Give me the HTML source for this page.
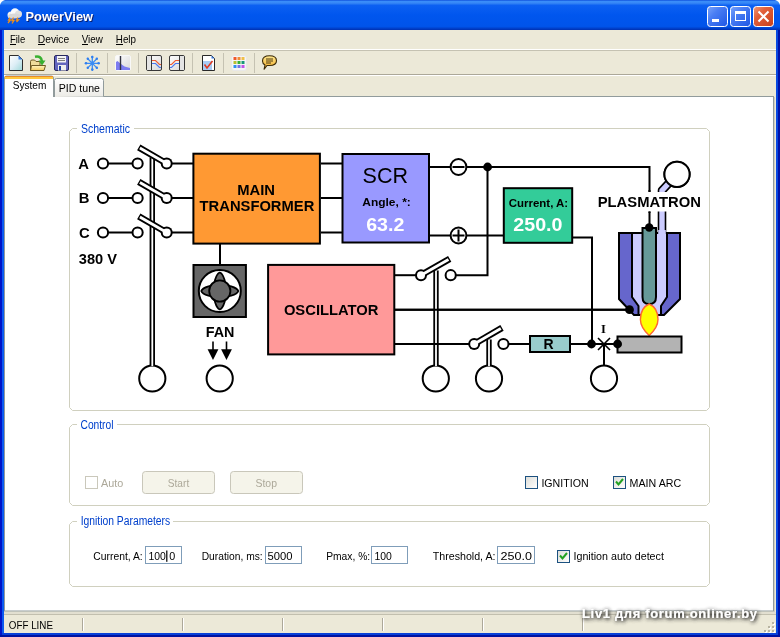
<!DOCTYPE html>
<html><head><meta charset="utf-8">
<style>
html,body{margin:0;padding:0;width:780px;height:637px;overflow:hidden;background:#fff}
svg{display:block;font-family:"Liberation Sans",sans-serif;will-change:transform}
</style></head><body>
<svg width="780" height="637" viewBox="0 0 780 637">
<defs>
 <linearGradient id="tb" x1="0" y1="0" x2="0" y2="1">
  <stop offset="0" stop-color="#0A48D8"/>
  <stop offset="0.04" stop-color="#3A8EFA"/>
  <stop offset="0.1" stop-color="#3888F6"/>
  <stop offset="0.18" stop-color="#0C60F2"/>
  <stop offset="0.5" stop-color="#0056EE"/>
  <stop offset="0.88" stop-color="#0054EA"/>
  <stop offset="0.93" stop-color="#0046D4"/>
  <stop offset="1" stop-color="#0030B0"/>
 </linearGradient>
 <linearGradient id="tabg" x1="0" y1="0" x2="0" y2="1">
  <stop offset="0" stop-color="#FFFFFF"/>
  <stop offset="1" stop-color="#ECEBE6"/>
 </linearGradient>
 <linearGradient id="cbg" x1="0" y1="0" x2="1" y2="1">
  <stop offset="0" stop-color="#DCDCD7"/>
  <stop offset="1" stop-color="#FFFFFF"/>
 </linearGradient>
 <linearGradient id="minb" x1="0" y1="0" x2="1" y2="1">
  <stop offset="0" stop-color="#7AA4FA"/>
  <stop offset="0.35" stop-color="#4A7EF4"/>
  <stop offset="1" stop-color="#1E56E4"/>
 </linearGradient>
 <linearGradient id="clsb" x1="0" y1="0" x2="1" y2="1">
  <stop offset="0" stop-color="#F09A78"/>
  <stop offset="0.35" stop-color="#E2603A"/>
  <stop offset="1" stop-color="#C8401A"/>
 </linearGradient>
</defs>

<!-- window frame -->
<rect x="0" y="0" width="780" height="637" fill="#0842D6"/>
<rect x="0" y="28" width="2" height="609" fill="#0014C8"/>
<rect x="2" y="28" width="2" height="609" fill="#0C5AF0"/>
<rect x="776" y="28" width="2" height="609" fill="#0848E0"/>
<rect x="778" y="28" width="2" height="609" fill="#0012A8"/>
<rect x="2" y="633" width="776" height="2" fill="#0840D8"/>
<rect x="0" y="635" width="780" height="2" fill="#0012A0"/>
<rect x="0" y="0" width="780" height="30" fill="url(#tb)"/>
<path d="M0 0 H5 Q1 1 0 5 Z" fill="#fff"/>
<path d="M780 0 H775 Q779 1 780 5 Z" fill="#fff"/>
<rect x="4" y="30" width="772" height="603" fill="#ECE9D8"/>

<!-- title -->
<g>
 <circle cx="11" cy="15" r="3.5" fill="#F0F0F0"/>
 <circle cx="15" cy="12.5" r="4.2" fill="#FAFAFA"/>
 <circle cx="18.5" cy="14" r="3.5" fill="#E0E0E0"/>
 <ellipse cx="14.5" cy="16" rx="6.5" ry="2.5" fill="#D8D8D8"/>
 <path d="M10 17.5 L8.5 20 H10.5 L8 23 M13.5 17.5 L12 20.5 H14 L12 23.5 M18 17.5 L16.5 20 H18.5 L16.5 22" stroke="#F29018" stroke-width="1.3" fill="none"/>
</g>
<text x="26.5" y="22" font-size="13" font-weight="bold" fill="#0A1E6E" textLength="67.5" lengthAdjust="spacingAndGlyphs">PowerView</text>
<text x="25.5" y="21" font-size="13" font-weight="bold" fill="#FFFFFF" textLength="67.5" lengthAdjust="spacingAndGlyphs">PowerView</text>

<!-- title buttons -->
<rect x="707.5" y="6.5" width="20" height="20" rx="3" fill="url(#minb)" stroke="#FFFFFF" stroke-width="1"/>
<rect x="712" y="19" width="7" height="3" fill="#fff"/>
<rect x="730.5" y="6.5" width="20" height="20" rx="3" fill="url(#minb)" stroke="#FFFFFF" stroke-width="1"/>
<rect x="735.5" y="11.5" width="10" height="9" fill="none" stroke="#fff" stroke-width="1"/>
<rect x="735" y="11" width="11" height="3" fill="#fff"/>
<rect x="753.5" y="6.5" width="20" height="20" rx="3" fill="url(#clsb)" stroke="#FFFFFF" stroke-width="1"/>
<path d="M758.5 11.5 L768.5 21.5 M768.5 11.5 L758.5 21.5" stroke="#fff" stroke-width="2"/>

<!-- menu -->
<g font-size="11.6" fill="#000">
 <text x="9.9" y="42.7" textLength="15.3" lengthAdjust="spacingAndGlyphs">File</text>
 <text x="37.8" y="42.7" textLength="31.4" lengthAdjust="spacingAndGlyphs">Device</text>
 <text x="81.7" y="42.7" textLength="21.1" lengthAdjust="spacingAndGlyphs">View</text>
 <text x="115.8" y="42.7" textLength="20.2" lengthAdjust="spacingAndGlyphs">Help</text>
</g>
<g fill="#000">
 <rect x="10" y="44" width="6" height="1"/><rect x="38" y="44" width="7" height="1"/><rect x="82" y="44" width="6" height="1"/><rect x="116" y="44" width="7" height="1"/>
</g>
<!-- toolbar lines -->
<rect x="4" y="49" width="772" height="1" fill="#FFFFFF"/>
<rect x="4" y="50" width="772" height="1" fill="#C5C2B2"/>
<rect x="4" y="74" width="772" height="1" fill="#ACA899"/>
<rect x="4" y="75" width="772" height="1" fill="#FFFFFF"/>

<!-- toolbar icons -->
<g id="tools">
 <defs>
  <linearGradient id="docg" x1="0" y1="0" x2="1" y2="1"><stop offset="0" stop-color="#FFFFFF"/><stop offset="0.5" stop-color="#DDEEF6"/><stop offset="1" stop-color="#9ED8D8"/></linearGradient>
  <linearGradient id="fldg" x1="0" y1="0" x2="0" y2="1"><stop offset="0" stop-color="#FFF4C0"/><stop offset="1" stop-color="#F2CC60"/></linearGradient>
  <linearGradient id="chg" x1="0" y1="0" x2="1" y2="1"><stop offset="0" stop-color="#FFFFFF"/><stop offset="1" stop-color="#D8D8D8"/></linearGradient>
  <linearGradient id="spg" x1="0" y1="0" x2="0" y2="1"><stop offset="0" stop-color="#FFE890"/><stop offset="1" stop-color="#F0A820"/></linearGradient>
 </defs>
 <!-- new -->
 <path d="M9.5 55.5 H18.5 L22.5 59.5 V70.5 H9.5 Z" fill="url(#docg)" stroke="#2E2E2E"/>
 <path d="M18.5 55.5 L22.5 59.5 H18.5 Z" fill="#3C7CE0"/>
 <!-- open -->
 <path d="M30.5 70.5 V61.5 Q30.5 60 32 60 H34.5 L36 61.5 H40 V70.5 Z" fill="#EEDC9A" stroke="#6E5A22"/>
 <path d="M30.5 70.5 L31.5 65.5 H45.5 L44 70.5 Z" fill="url(#fldg)" stroke="#6E5A22"/>
 <path d="M35 56.8 Q41.5 55.5 42 61.5" stroke="#38B030" stroke-width="2.6" fill="none"/>
 <path d="M38.5 60.5 H45.5 L42 65.5 Z" fill="#38B030"/>
 <!-- save -->
 <rect x="54.5" y="55.5" width="14" height="15" rx="1.5" fill="#6366BE" stroke="#28285E"/>
 <rect x="57" y="56" width="9" height="6.5" fill="#F4F4F4"/>
 <path d="M58 58.5 H65 M58 60.5 H65" stroke="#707070" stroke-width="0.9"/>
 <rect x="58" y="65" width="8" height="5.5" fill="#EEEEEE"/>
 <rect x="59" y="66" width="2" height="4.5" fill="#2040A0"/>
 <!-- sep -->
 <rect x="76" y="53" width="1" height="20" fill="#C5C2B2"/>
 <!-- snowflake -->
 <g stroke="#3A8CF4" stroke-width="1.3" stroke-linecap="round">
  <path d="M92.3 56.5 V70 M85.5 63.3 H99 M87.5 58.5 L97.1 68.1 M87.5 68.1 L97.1 58.5"/>
 </g>
 <g fill="#2F7FF0">
  <circle cx="92.3" cy="57" r="1.3"/><circle cx="92.3" cy="69.6" r="1.3"/><circle cx="86" cy="63.3" r="1.3"/><circle cx="98.6" cy="63.3" r="1.3"/>
  <circle cx="87.8" cy="58.8" r="1.2"/><circle cx="96.8" cy="67.8" r="1.2"/><circle cx="87.8" cy="67.8" r="1.2"/><circle cx="96.8" cy="58.8" r="1.2"/>
 </g>
 <rect x="107" y="53" width="1" height="20" fill="#C5C2B2"/>
 <!-- chart1 -->
 <rect x="115.5" y="55.5" width="15" height="15" rx="1.5" fill="url(#chg)" stroke="#F8F8F8"/>
 <path d="M116 70 V62 L117.5 61 L120.5 63.5 Q124 67 130 68 V70 Z" fill="#7C7CF0"/>
 <rect x="119.8" y="56" width="1.4" height="14" fill="#303040"/>
 <rect x="138" y="53" width="1" height="20" fill="#C5C2B2"/>
 <!-- chart2 -->
 <rect x="146.5" y="55.5" width="15" height="15" rx="1.5" fill="url(#chg)" stroke="#383838"/>
 <rect x="147" y="56" width="4.5" height="14" fill="#E4E4E4"/>
 <rect x="151" y="56" width="1" height="14" fill="#383838"/>
 <path d="M152 60.5 H155.5 L159.5 64.5 H161" stroke="#F05A30" fill="none" stroke-width="1.1"/>
 <path d="M152 63.5 H155.5 L159.5 67.5 H161" stroke="#4A78F0" fill="none" stroke-width="1.1"/>
 <!-- chart3 -->
 <rect x="169.5" y="55.5" width="15" height="15" rx="1.5" fill="url(#chg)" stroke="#383838"/>
 <rect x="180" y="56" width="4" height="14" fill="#E4E4E4"/>
 <rect x="179" y="56" width="1" height="14" fill="#383838"/>
 <path d="M170 64.5 H171.5 L175.5 60.5 H179" stroke="#F05A30" fill="none" stroke-width="1.1"/>
 <path d="M170 67.5 H171.5 L175.5 63.5 H179" stroke="#4A78F0" fill="none" stroke-width="1.1"/>
 <rect x="192" y="53" width="1" height="20" fill="#C5C2B2"/>
 <!-- check doc -->
 <path d="M202.5 55.5 H211.5 L214.5 58.5 V70.5 H202.5 Z" fill="#FFFFFF" stroke="#282828"/>
 <path d="M211.5 55.5 L214.5 58.5 H211.5 Z" fill="#3C7CE0"/>
 <rect x="203" y="61" width="9" height="9" fill="#A8CCF4"/>
 <path d="M204.5 64.5 L207 68 L212.5 61" stroke="#E03A20" stroke-width="1.6" fill="none"/>
 <rect x="223" y="53" width="1" height="20" fill="#C5C2B2"/>
 <!-- grid -->
 <rect x="231.5" y="55.5" width="15" height="15" rx="2.5" fill="#F6F6F6" stroke="#E8E8E8"/>
 <rect x="233.5" y="57" width="3" height="3" fill="#F0582A"/><rect x="237.5" y="57" width="3" height="3" fill="#F08A38"/><rect x="241.5" y="57" width="3" height="3" fill="#F0C048"/>
 <rect x="233.5" y="61" width="3" height="3" fill="#B8C030"/><rect x="237.5" y="61" width="3" height="3" fill="#38B038"/><rect x="241.5" y="61" width="3" height="3" fill="#189878"/>
 <rect x="233.5" y="65" width="3" height="3" fill="#3090F0"/><rect x="237.5" y="65" width="3" height="3" fill="#7474E8"/><rect x="241.5" y="65" width="3" height="3" fill="#C054E8"/>
 <rect x="254" y="53" width="1" height="20" fill="#C5C2B2"/>
 <!-- speech -->
 <path d="M262.5 61 Q262.5 55.8 269.5 55.8 Q276.5 55.8 276.5 60.8 Q276.5 65.5 269.5 65.5 L267 65.5 L264 69.5 L265 65 Q262.5 63.8 262.5 61 Z" fill="url(#spg)" stroke="#3A2A08" stroke-width="1.1"/>
 <path d="M266 59 H273 M266 61 H273 M266 63 H271" stroke="#3A2A08" stroke-width="0.9"/>
</g>

<!-- tab panel -->
<rect x="4.5" y="96.5" width="769" height="514.5" fill="#FFFFFF" stroke="#919B9C"/>
<rect x="774" y="97" width="1" height="515" fill="#D0CEC0"/>
<rect x="4" y="612" width="772" height="2" fill="#E2DFD0"/>
<!-- tabs -->
<path d="M54.5 97 V80.5 Q54.5 78.5 56.5 78.5 H101.5 Q103.5 78.5 103.5 80.5 V96.5" fill="url(#tabg)" stroke="#919B9C"/>
<path d="M4.5 97 V78 Q4.5 76 6.5 76 H51.5 Q53.5 76 53.5 78 V97" fill="#FFFFFF" stroke="#919B9C"/>
<path d="M5 79 V77.5 Q5 76 7 76 H51 Q53 76 53 77.5 V79 Z" fill="#FFC83C"/>
<rect x="5" y="76" width="48" height="1" fill="#E68B2C"/>
<rect x="5" y="96" width="48" height="2" fill="#FFFFFF"/>
<text x="12.7" y="89.4" font-size="11.8" textLength="33.6" lengthAdjust="spacingAndGlyphs">System</text>
<text x="58.8" y="91.5" font-size="11.8" textLength="41.1" lengthAdjust="spacingAndGlyphs">PID tune</text>

<!-- group boxes -->
<g fill="none" stroke="#D0D0BF">
 <path d="M72.5 128.5 H706.5 L709.5 131.5 V407.5 L706.5 410.5 H72.5 L69.5 407.5 V131.5 Z M72.5 424.5 H706.5 L709.5 427.5 V502.5 L706.5 505.5 H72.5 L69.5 502.5 V427.5 Z M72.5 521.5 H706.5 L709.5 524.5 V583.5 L706.5 586.5 H72.5 L69.5 583.5 V524.5 Z"/>
</g>
<g fill="#FFFFFF">
 <rect x="77" y="123" width="57" height="10"/>
 <rect x="77" y="419" width="40" height="10"/>
 <rect x="77" y="515" width="96" height="10"/>
</g>
<g font-size="12" fill="#0040CC">
 <text x="81" y="132.5" textLength="49" lengthAdjust="spacingAndGlyphs">Schematic</text>
 <text x="80.5" y="429" textLength="33" lengthAdjust="spacingAndGlyphs">Control</text>
 <text x="80.7" y="525" textLength="89.5" lengthAdjust="spacingAndGlyphs">Ignition Parameters</text>
</g>

<!-- SCHEMATIC -->
<g id="sch" stroke="#000" stroke-width="2" fill="none">
 <!-- input lines -->
 <path d="M107.5 163.5 H133 M107.5 198 H133 M107.5 232.5 H133"/>
 <path d="M172 163.5 H193 M172 198 H193 M172 232.5 H193"/>
 <path d="M321 163.5 H342 M321 198 H342 M321 232.5 H342"/>
 <!-- scr outputs -->
 <path d="M430 167 H450.5 M466.5 167 H649.5 V227"/>
 <path d="M430 235.5 H450.5 M466.5 235.5 H503"/>
 <path d="M487.5 167 V275.2 H456"/>
 <path d="M573 237.5 H592 V344"/>
 <!-- fan connector -->
 <path d="M220 244 V264"/>
 <!-- osc lines -->
 <path d="M395 275.2 H416"/>
 <path d="M395 309.7 H629.5"/>
 <path d="M395 344 H469"/>
 <path d="M508.5 344 H530 M570 344 H617"/>
 <path d="M604 344 V365"/>
</g>

<!-- boxes -->
<rect x="193.4" y="153.7" width="126.5" height="89.9" fill="#FF9933" stroke="#000" stroke-width="2"/>
<rect x="342.5" y="154" width="86.5" height="88.5" fill="#9999FF" stroke="#000" stroke-width="2"/>
<rect x="503.8" y="188.2" width="68.4" height="54.6" fill="#33CC99" stroke="#000" stroke-width="2"/>
<rect x="268.1" y="264.9" width="126.2" height="89.5" fill="#FF9999" stroke="#000" stroke-width="2"/>
<rect x="193.5" y="265" width="52.4" height="52" fill="#666666" stroke="#000" stroke-width="2"/>
<rect x="530" y="336" width="40" height="16" fill="#99CCCC" stroke="#000" stroke-width="2"/>

<!-- fan -->
<circle cx="219.8" cy="291" r="21" fill="#fff" stroke="#000" stroke-width="2"/>
<path d="M201.3 291 C202.5 287 213 284.6 219.8 284.6 C226.6 284.6 237.1 287 238.3 291 C237.1 295 226.6 297.4 219.8 297.4 C213 297.4 202.5 295 201.3 291 Z" fill="#666" stroke="#000" stroke-width="1.8"/>
<path d="M219.8 272.5 C223.8 273.7 226.2 284.2 226.2 291 C226.2 297.8 223.8 308.3 219.8 309.5 C215.8 308.3 213.4 297.8 213.4 291 C213.4 284.2 215.8 273.7 219.8 272.5 Z" fill="#666" stroke="#000" stroke-width="1.8"/>
<circle cx="219.8" cy="291" r="10.6" fill="#666" stroke="#000" stroke-width="1.8"/>

<!-- circles -->
<g fill="#fff" stroke="#000" stroke-width="2">
 <circle cx="103" cy="163.5" r="5.1"/><circle cx="103" cy="198" r="5.1"/><circle cx="103" cy="232.5" r="5.1"/>
 <circle cx="137.6" cy="163.5" r="5.1"/><circle cx="137.6" cy="198" r="5.1"/><circle cx="137.6" cy="232.5" r="5.1"/>
 <circle cx="450.7" cy="275.2" r="5.1"/>
 <circle cx="503.4" cy="344" r="5.1"/>
 <circle cx="458.5" cy="167" r="7.9"/>
 <circle cx="458.5" cy="235.5" r="7.9"/>
 <circle cx="152.3" cy="378.5" r="13.1"/>
 <circle cx="219.7" cy="378.5" r="13.1"/>
 <circle cx="435.8" cy="378.5" r="13.1"/>
 <circle cx="489" cy="378.5" r="13.1"/>
 <circle cx="604" cy="378.5" r="13.1"/>
 <circle cx="677" cy="174.3" r="12.6"/>
</g>
<path d="M452.5 167 H464.5 M452.5 235.5 H464.5 M458.5 229.5 V241.5" stroke="#000" stroke-width="2"/>

<!-- double lines (mechanical links) -->
<g>
 <path d="M152.3 157.5 V365.5" stroke="#000" stroke-width="5.4"/>
 <path d="M152.3 157.5 V366" stroke="#fff" stroke-width="1.8"/>
 <path d="M436 270.5 V365.5" stroke="#000" stroke-width="5.4"/>
 <path d="M436 270.5 V366" stroke="#fff" stroke-width="1.8"/>
 <path d="M489 339.5 V365.5" stroke="#000" stroke-width="5.4"/>
 <path d="M489 339.5 V366" stroke="#fff" stroke-width="1.8"/>
</g>
<!-- line over link (horizontal crosses) -->
<path d="M395 309.7 H629.5" stroke="#000" stroke-width="2"/>
<path d="M395 344 H469" stroke="#000" stroke-width="2"/>

<!-- switch bars -->
<g id="sw3">
 <g stroke="#000" stroke-width="6.6" stroke-linecap="butt">
  <path d="M166.7 163.5 L138.75 147.35 M166.7 198 L138.75 181.85 M166.7 232.5 L138.75 216.35"/>
  <path d="M421 275.2 L449.7 258.8"/>
  <path d="M474.2 344 L502 327.8"/>
 </g>
 <g fill="#000">
  <circle cx="166.7" cy="163.5" r="6"/><circle cx="166.7" cy="198" r="6"/><circle cx="166.7" cy="232.5" r="6"/>
  <circle cx="421" cy="275.2" r="6"/><circle cx="474.2" cy="344" r="6"/>
 </g>
 <g stroke="#fff" stroke-width="2.8">
  <path d="M166.7 163.5 L139.9 148 M166.7 198 L139.9 182.5 M166.7 232.5 L139.9 217"/>
  <path d="M421 275.2 L448.5 259.5"/>
  <path d="M474.2 344 L500.8 328.5"/>
 </g>
 <g fill="#fff">
  <circle cx="166.7" cy="163.5" r="4"/><circle cx="166.7" cy="198" r="4"/><circle cx="166.7" cy="232.5" r="4"/>
  <circle cx="421" cy="275.2" r="4"/><circle cx="474.2" cy="344" r="4"/>
 </g>
</g>

<!-- arrows -->
<g stroke="#000" stroke-width="1.6"><path d="M213 341.5 V350 M226.5 341.5 V350"/></g>
<path d="M207.6 349.3 H218.4 L213 359.9 Z M221.1 349.3 H231.9 L226.5 359.9 Z" fill="#000"/>

<!-- plasmatron -->
<!-- gas tube -->
<path d="M669 183 L662 190.5 V236" stroke="#000" stroke-width="8.6" fill="none" stroke-linejoin="round"/>
<path d="M669 183 L662 190.5 V236" stroke="#CCCCFF" stroke-width="5.4" fill="none" stroke-linejoin="round"/>
<circle cx="677" cy="174.3" r="12.6" fill="#fff" stroke="#000" stroke-width="2"/>
<!-- nozzle -->
<path d="M619 233 H680 V299 L664 315 H634 L619 299 Z" fill="#6666CC" stroke="#000" stroke-width="2"/>
<path d="M632 233 H667 V297 L661 306 V315 H638.5 V306 L632 297 Z" fill="#CCCCFF" stroke="#000" stroke-width="2"/>
<rect x="658.2" y="230" width="7.6" height="5" fill="#CCCCFF"/>
<path d="M642.5 228 H656 V297 Q656 304 649.2 304 Q642.5 304 642.5 297 Z" fill="#669999" stroke="#000" stroke-width="2"/>
<!-- flame -->
<path d="M649.2 304 C655 306.5 658 312.5 658 319.5 C658 326 653.5 331.5 649.2 335.5 C644.9 331.5 640.4 326 640.4 319.5 C640.4 312.5 643.4 306.5 649.2 304 Z" fill="#FFFF00" stroke="#FF6633" stroke-width="1.4"/>
<!-- workpiece -->
<rect x="617.5" y="336.5" width="64" height="16" fill="#B3B3B3" stroke="#000" stroke-width="2"/>
<!-- dots -->
<g fill="#000">
 <circle cx="487.6" cy="167" r="4.4"/>
 <circle cx="649.2" cy="227.5" r="4.2"/>
 <circle cx="629.5" cy="309.7" r="4.4"/>
 <circle cx="591.5" cy="344" r="4.4"/>
 <circle cx="617.6" cy="344" r="4.4"/>
</g>
<!-- X mark -->
<path d="M598 338 L610 350 M610 338 L598 350" stroke="#000" stroke-width="1.6"/>
<text x="601" y="332.8" font-family="Liberation Serif" font-size="12.5" font-weight="bold">I</text>

<!-- plasmatron label background -->
<rect x="597" y="192" width="105" height="19.5" fill="#fff"/>
<path d="M649.5 190 V192 M649.5 211.5 V213" stroke="#000" stroke-width="2"/>

<!-- schematic text -->
<g font-weight="bold" fill="#000">
 <text x="78.3" y="169.3" font-size="14.8">A</text>
 <text x="78.8" y="203" font-size="14.8">B</text>
 <text x="78.9" y="237.8" font-size="14.8">C</text>
 <text x="78.8" y="263.8" font-size="14.8" textLength="38.2" lengthAdjust="spacingAndGlyphs">380 V</text>
 <text x="237.2" y="194.6" font-size="14" textLength="37.8" lengthAdjust="spacingAndGlyphs">MAIN</text>
 <text x="199.6" y="210.8" font-size="14" textLength="114.7" lengthAdjust="spacingAndGlyphs">TRANSFORMER</text>
 <text x="362.3" y="206" font-size="11.5" textLength="48.5" lengthAdjust="spacingAndGlyphs">Angle, *:</text>
 <text x="366.2" y="231" font-size="19" fill="#fff" textLength="38.2" lengthAdjust="spacingAndGlyphs">63.2</text>
 <text x="508.8" y="207" font-size="11.5" textLength="59.4" lengthAdjust="spacingAndGlyphs">Current, A:</text>
 <text x="513.3" y="231" font-size="19" fill="#fff" textLength="49.2" lengthAdjust="spacingAndGlyphs">250.0</text>
 <text x="597.7" y="206.6" font-size="14" textLength="103.3" lengthAdjust="spacingAndGlyphs">PLASMATRON</text>
 <text x="283.9" y="314.6" font-size="14" textLength="94.6" lengthAdjust="spacingAndGlyphs">OSCILLATOR</text>
 <text x="205.7" y="336.5" font-size="14" textLength="28.7" lengthAdjust="spacingAndGlyphs">FAN</text>
 <text x="543.5" y="349" font-size="14">R</text>
</g>
<text x="362.6" y="182.6" font-size="22" textLength="45.4" lengthAdjust="spacingAndGlyphs">SCR</text>

<!-- CONTROL -->
<rect x="85.5" y="476.5" width="12" height="12" fill="#FFFFFF" stroke="#CAC8BB"/>
<text x="101" y="487" font-size="11.8" fill="#ACA899" textLength="22.3" lengthAdjust="spacingAndGlyphs">Auto</text>
<rect x="142.5" y="471.5" width="72" height="22" rx="3" fill="#F5F4EA" stroke="#C9C7BA"/>
<text x="167.8" y="487" font-size="11.8" fill="#ACA899" textLength="21.4" lengthAdjust="spacingAndGlyphs">Start</text>
<rect x="230.5" y="471.5" width="72" height="22" rx="3" fill="#F5F4EA" stroke="#C9C7BA"/>
<text x="255.5" y="487" font-size="11.8" fill="#ACA899" textLength="21.5" lengthAdjust="spacingAndGlyphs">Stop</text>

<rect x="525.5" y="476.5" width="12" height="12" fill="url(#cbg)" stroke="#1C5180"/>
<text x="541.4" y="487" font-size="11.8" textLength="47.2" lengthAdjust="spacingAndGlyphs">IGNITION</text>
<rect x="613.5" y="476.5" width="12" height="12" fill="url(#cbg)" stroke="#1C5180"/>
<path d="M616 481.5 L618.5 484.5 L623 479" stroke="#21A121" stroke-width="2" fill="none"/>
<text x="629.6" y="487" font-size="11.8" textLength="51.6" lengthAdjust="spacingAndGlyphs">MAIN ARC</text>

<!-- IGNITION PARAMS -->
<g font-size="11.8" fill="#000">
 <text x="93.3" y="559.5" textLength="49.4" lengthAdjust="spacingAndGlyphs">Current, A:</text>
 <text x="201.7" y="559.5" textLength="61" lengthAdjust="spacingAndGlyphs">Duration, ms:</text>
 <text x="326.2" y="559.5" textLength="44" lengthAdjust="spacingAndGlyphs">Pmax, %:</text>
 <text x="432.8" y="559.5" textLength="62.7" lengthAdjust="spacingAndGlyphs">Threshold, A:</text>
 <text x="573.5" y="559.5" textLength="90.4" lengthAdjust="spacingAndGlyphs">Ignition auto detect</text>
</g>
<g fill="#fff" stroke="#7F9DB9">
 <rect x="145.5" y="546.5" width="36" height="17"/>
 <rect x="265.5" y="546.5" width="36" height="17"/>
 <rect x="371.5" y="546.5" width="36" height="17"/>
 <rect x="497.5" y="546.5" width="37" height="17"/>
</g>
<g font-size="11.8" fill="#000">
 <text x="148.4" y="559.6" textLength="17.4" lengthAdjust="spacingAndGlyphs">100</text><text x="169.2" y="559.6" textLength="6" lengthAdjust="spacingAndGlyphs">0</text>
 <text x="267.6" y="559.6" textLength="25" lengthAdjust="spacingAndGlyphs">5000</text>
 <text x="374.4" y="559.6" textLength="17.4" lengthAdjust="spacingAndGlyphs">100</text>
 <text x="500.5" y="559.6" textLength="31.5" lengthAdjust="spacingAndGlyphs">250.0</text>
</g>
<rect x="166.2" y="550.5" width="1.2" height="11.3" fill="#000"/>
<rect x="557.5" y="550.5" width="12" height="12" fill="url(#cbg)" stroke="#1C5180"/>
<path d="M560 555.5 L562.5 558.5 L567 553" stroke="#21A121" stroke-width="2" fill="none"/>

<!-- status bar -->
<rect x="4" y="614" width="772" height="1" fill="#C2BFAE"/>
<rect x="4" y="615" width="772" height="18" fill="#ECE9D8"/>
<text x="8.8" y="628.6" font-size="11.8" textLength="44.2" lengthAdjust="spacingAndGlyphs">OFF LINE</text>
<g fill="#ACA899">
 <rect x="82" y="618" width="1" height="13"/><rect x="182" y="618" width="1" height="13"/><rect x="282" y="618" width="1" height="13"/>
 <rect x="382" y="618" width="1" height="13"/><rect x="482" y="618" width="1" height="13"/><rect x="582" y="618" width="1" height="13"/>
</g>
<g fill="#FFFFFF">
 <rect x="83" y="618" width="1" height="13"/><rect x="183" y="618" width="1" height="13"/><rect x="283" y="618" width="1" height="13"/>
 <rect x="383" y="618" width="1" height="13"/><rect x="483" y="618" width="1" height="13"/><rect x="583" y="618" width="1" height="13"/>
</g>
<g fill="#FFFFFF">
 <rect x="773" y="623" width="2" height="2"/><rect x="769" y="627" width="2" height="2"/><rect x="773" y="627" width="2" height="2"/>
 <rect x="765" y="631" width="2" height="2"/><rect x="769" y="631" width="2" height="2"/><rect x="773" y="631" width="2" height="2"/>
</g>
<g fill="#B8B4A2">
 <rect x="772" y="622" width="2" height="2"/><rect x="768" y="626" width="2" height="2"/><rect x="772" y="626" width="2" height="2"/>
 <rect x="764" y="630" width="2" height="2"/><rect x="768" y="630" width="2" height="2"/><rect x="772" y="630" width="2" height="2"/>
</g>
<!-- watermark -->
<filter id="wms" x="-10%" y="-80%" width="120%" height="260%">
 <feGaussianBlur in="SourceAlpha" stdDeviation="2"/>
 <feOffset dx="0.8" dy="1" result="b"/>
 <feComponentTransfer in="b" result="c"><feFuncA type="linear" slope="1.6"/></feComponentTransfer>
 <feFlood flood-color="#282828"/>
 <feComposite in2="c" operator="in" result="sh"/>
 <feMerge><feMergeNode in="sh"/><feMergeNode in="SourceGraphic"/></feMerge>
</filter>
<text x="582" y="618" font-size="13" font-weight="bold" fill="#FFFFFF" filter="url(#wms)" textLength="175" lengthAdjust="spacing">Liv1 для forum.onliner.by</text>
</svg>
</body></html>
